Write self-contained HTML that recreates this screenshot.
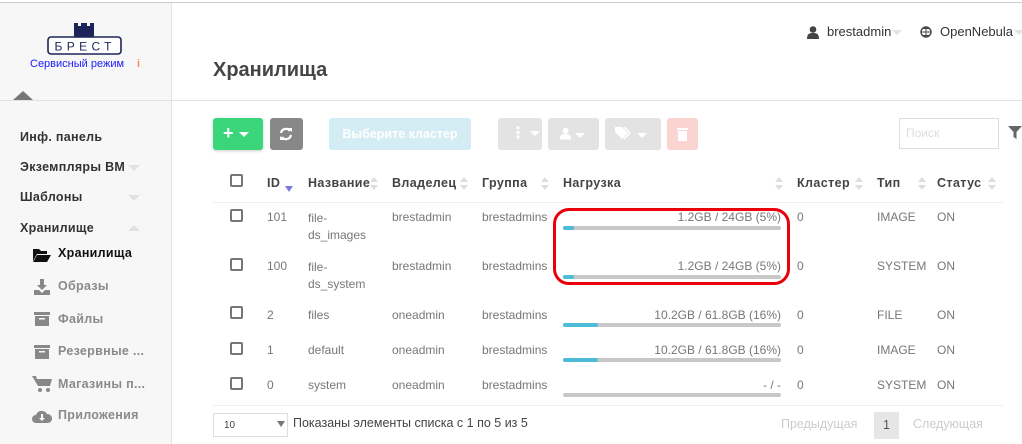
<!DOCTYPE html>
<html><head><meta charset="utf-8"><style>
*{margin:0;padding:0;box-sizing:border-box}
body{width:1022px;height:444px;overflow:hidden;background:#fff;font-family:"Liberation Sans","DejaVu Sans",sans-serif;position:relative;color:#555}
.a{position:absolute;white-space:nowrap}
.side{position:absolute;left:0;top:3px;width:172px;height:441px;background:#f7f7f7;border-right:1px solid #e3e3e3}
.nav{font-size:12.5px;font-weight:bold;color:#333;letter-spacing:.3px}
.sub{font-size:12.5px;font-weight:bold;color:#8a8a8a;letter-spacing:.3px}
.tri{position:absolute;width:0;height:0;border-left:6px solid transparent;border-right:6px solid transparent;border-top:6px solid #e2e2e2}
.th{font-size:12.5px;font-weight:bold;color:#444;letter-spacing:.4px}
.td{font-size:12px;color:#777}
.cb{position:absolute;width:13px;height:13px;border:2px solid #777;border-radius:2px}
.bar{position:absolute;left:563px;width:218px;height:4px;background:#c8c8c8;border-radius:2px}
.bar i{position:absolute;left:0;top:0;height:4px;background:#4dbcd8;border-radius:2px}
.srt{position:absolute;width:8px;height:14px}
.srt:before{content:"";position:absolute;top:0;left:0;border-left:4px solid transparent;border-right:4px solid transparent;border-bottom:5px solid #ddd}
.srt:after{content:"";position:absolute;top:8px;left:0;border-left:4px solid transparent;border-right:4px solid transparent;border-top:5px solid #ddd}
.btn{position:absolute;border-radius:3px;top:118px;height:32px}
.car{display:inline-block;border-left:5px solid transparent;border-right:5px solid transparent;border-top:5px solid #fff;vertical-align:middle}
</style></head><body>
<div class="a" style="left:0;top:2px;width:1022px;height:1px;background:#ccc"></div>
<div class="side"></div>
<div class="a" style="left:0;top:100px;width:1022px;height:1px;background:#e3e3e3"></div>
<!-- logo -->
<svg class="a" style="left:46px;top:21px" width="78" height="35" viewBox="0 0 78 35">
<path d="M28 2h4v3h3V2h6v3h3V2h4v15H28z" fill="#1d2457"/>
<rect x="2" y="16" width="73" height="17" rx="3" fill="#fff" stroke="#1d2457" stroke-width="1.6"/>
<text x="38.5" y="29.5" font-family="Liberation Sans" font-size="12" fill="#1d2457" text-anchor="middle" letter-spacing="3" textLength="60">БРЕСТ</text>
</svg>
<div class="a" style="left:30px;top:58px;font-size:11px;color:#1a1aff">Сервисный режим</div>
<div class="a" style="left:137px;top:58px;font-size:11px;color:#f39060;font-weight:bold">i</div>
<div class="a" style="left:13px;top:91px;border-left:10px solid transparent;border-right:10px solid transparent;border-bottom:9px solid #777"></div>
<div class="a nav" style="left:20px;top:130px">Инф. панель</div>
<div class="a nav" style="left:20px;top:160px">Экземпляры ВМ</div><div class="tri" style="left:128px;top:165px"></div>
<div class="a nav" style="left:20px;top:190px">Шаблоны</div><div class="tri" style="left:128px;top:195px"></div>
<div class="a nav" style="left:20px;top:221px">Хранилище</div><div class="tri" style="left:128px;top:225px;border-top:0;border-bottom:6px solid #e2e2e2"></div>
<svg class="a" style="left:33px;top:248px" width="18" height="14" viewBox="0 0 18 14"><path d="M0 1h6l2 2h6v3H4L0 13z M4 7h14l-4 7H0z" fill="#111"/></svg>
<div class="a nav" style="left:58px;top:246px;color:#111">Хранилища</div>
<svg class="a" style="left:34px;top:279px" width="16" height="16" viewBox="0 0 16 16"><path d="M6 0h4v6h3l-5 5-5-5h3z M0 11h5l3 3 3-3h5v5H0z" fill="#888"/></svg>
<div class="a sub" style="left:58px;top:279px">Образы</div>
<svg class="a" style="left:34px;top:312px" width="16" height="14" viewBox="0 0 16 14"><path d="M0 0h16v3H0z M1 4h14v10H1z" fill="#888"/><rect x="5" y="6" width="6" height="1.5" fill="#f7f7f7"/></svg>
<div class="a sub" style="left:58px;top:312px">Файлы</div>
<svg class="a" style="left:34px;top:345px" width="16" height="14" viewBox="0 0 16 14"><path d="M0 0h16v3H0z M1 4h14v10H1z" fill="#888"/><rect x="5" y="6" width="6" height="1.5" fill="#f7f7f7"/></svg>
<div class="a sub" style="left:58px;top:344px">Резервные ...</div>
<svg class="a" style="left:32px;top:376px" width="20" height="16" viewBox="0 0 20 16"><path d="M0 0h4l1 3h15l-2 7H6z" fill="#888"/><circle cx="8" cy="14" r="2" fill="#888"/><circle cx="16" cy="14" r="2" fill="#888"/></svg>
<div class="a sub" style="left:58px;top:377px">Магазины п...</div>
<svg class="a" style="left:32px;top:408px" width="20" height="16" viewBox="0 0 20 16"><path d="M4 15a4 4 0 0 1 0-8 6 6 0 0 1 11-1 4.5 4.5 0 0 1 1 9z" fill="#888"/><path d="M9 6h2v4h2l-3 3-3-3h2z" fill="#f7f7f7"/></svg>
<div class="a sub" style="left:58px;top:408px">Приложения</div>
<!-- header -->
<div class="a" style="left:213px;top:59px;font-size:20px;font-weight:bold;color:#444">Хранилища</div>
<svg class="a" style="left:807px;top:26px" width="12" height="13" viewBox="0 0 12 13"><circle cx="6" cy="3.5" r="3.3" fill="#444"/><path d="M0 13c0-5 2-6 6-6s6 1 6 6z" fill="#444"/></svg>
<div class="a" style="left:827px;top:24px;font-size:13px;color:#333">brestadmin</div>
<div class="tri" style="left:892px;top:30px;border-top-width:5px;border-left-width:5px;border-right-width:5px"></div>
<svg class="a" style="left:920px;top:26px" width="12" height="12" viewBox="0 0 12 12"><circle cx="6" cy="6" r="5" fill="none" stroke="#444" stroke-width="1.4"/><path d="M1 6h10M6 1v10M3 2.5h6M3 9.5h6" stroke="#444" stroke-width="1"/></svg>
<div class="a" style="left:940px;top:24px;font-size:13px;color:#333">OpenNebula</div>
<div class="tri" style="left:1014px;top:30px;border-top-width:5px;border-left-width:5px;border-right-width:5px"></div>
<!-- buttons -->
<div class="btn" style="left:213px;width:50px;background:#3cd67a;box-shadow:0 1px 3px rgba(0,0,0,.2);color:#fff;font-weight:bold;font-size:18px;padding:5px 0 0 10px;line-height:20px">+ <span class="car"></span></div>
<div class="btn" style="left:270px;width:33px;background:#888"><svg style="position:absolute;left:9px;top:9px" width="14" height="14" viewBox="0 0 14 14"><path d="M2 6a5 5 0 0 1 9-2M12 8a5 5 0 0 1-9 2" fill="none" stroke="#fff" stroke-width="2.2"/><path d="M9 1l4 0 0 4z M5 13l-4 0 0-4z" fill="#fff"/></svg></div>
<div class="btn" style="left:329px;width:142px;background:#d4ecf4;color:#fff;font-weight:bold;font-size:12.5px;text-align:center;line-height:32px">Выберите кластер</div>
<div class="btn" style="left:498px;width:44px;background:#e3e3e3;color:#fff;font-weight:bold;padding-left:12px;line-height:32px">⋮ <span class="car"></span></div>
<div class="btn" style="left:548px;width:51px;background:#e3e3e3;padding:9px 0 0 12px"><svg width="11" height="13" viewBox="0 0 12 13"><circle cx="6" cy="3.5" r="3.3" fill="#fff"/><path d="M0 13c0-5 2-6 6-6s6 1 6 6z" fill="#fff"/></svg> <span class="car"></span></div>
<div class="btn" style="left:605px;width:56px;background:#e3e3e3;padding:9px 0 0 10px"><svg width="18" height="13" viewBox="0 0 18 13"><path d="M0 0h7l6 6-6 6-7-7z" fill="#fff"/><path d="M9 0l6 6-6 6" fill="none" stroke="#fff" stroke-width="1.5"/></svg> <span class="car"></span></div>
<div class="btn" style="left:667px;width:31px;background:#f9d4d0"><svg style="position:absolute;left:10px;top:9px" width="11" height="14" viewBox="0 0 11 14"><path d="M0 1h11v2H0z M1 4h9v10H1z" fill="#fff"/></svg></div>
<div class="a" style="left:899px;top:118px;width:100px;height:31px;border:1px solid #ddd;font-size:12px;color:#ddd;padding:7px 6px">Поиск</div>
<svg class="a" style="left:1008px;top:126px" width="14" height="13" viewBox="0 0 14 13"><path d="M0 0h14L8.5 6v7l-3-2V6z" fill="#666"/></svg>
<!-- table header -->
<div class="cb" style="left:230px;top:174px"></div>
<div class="a th" style="left:267px;top:176px">ID</div>
<div class="a" style="left:285px;top:186px;border-left:4px solid transparent;border-right:4px solid transparent;border-top:6px solid #7b7bdc"></div>
<div class="a th" style="left:308px;top:176px">Название</div><div class="srt" style="left:370px;top:177px"></div>
<div class="a th" style="left:392px;top:176px">Владелец</div><div class="srt" style="left:460px;top:177px"></div>
<div class="a th" style="left:482px;top:176px">Группа</div><div class="srt" style="left:541px;top:177px"></div>
<div class="a th" style="left:563px;top:176px">Нагрузка</div><div class="srt" style="left:775px;top:177px"></div>
<div class="a th" style="left:797px;top:176px">Кластер</div><div class="srt" style="left:855px;top:177px"></div>
<div class="a th" style="left:877px;top:176px">Тип</div><div class="srt" style="left:918px;top:177px"></div>
<div class="a th" style="left:937px;top:176px">Статус</div><div class="srt" style="left:988px;top:177px"></div>
<div class="a" style="left:213px;top:202px;width:790px;height:1px;background:#eee"></div>
<!-- rows -->
<div class="cb" style="left:230px;top:209px"></div>
<div class="a td" style="left:267px;top:210px">101</div><div class="a td" style="left:308px;top:210px;line-height:17px">file-<br>ds_images</div>
<div class="a td" style="left:392px;top:210px">brestadmin</div><div class="a td" style="left:482px;top:210px">brestadmins</div>
<div class="a td" style="left:563px;width:218px;text-align:right;top:210px">1.2GB / 24GB (5%)</div>
<div class="bar" style="top:226px"><i style="width:11px"></i></div>
<div class="a td" style="left:797px;top:210px">0</div><div class="a td" style="left:877px;top:210px">IMAGE</div><div class="a td" style="left:937px;top:210px">ON</div>

<div class="cb" style="left:230px;top:258px"></div>
<div class="a td" style="left:267px;top:259px">100</div><div class="a td" style="left:308px;top:259px;line-height:17px">file-<br>ds_system</div>
<div class="a td" style="left:392px;top:259px">brestadmin</div><div class="a td" style="left:482px;top:259px">brestadmins</div>
<div class="a td" style="left:563px;width:218px;text-align:right;top:259px">1.2GB / 24GB (5%)</div>
<div class="bar" style="top:275px"><i style="width:11px"></i></div>
<div class="a td" style="left:797px;top:259px">0</div><div class="a td" style="left:877px;top:259px">SYSTEM</div><div class="a td" style="left:937px;top:259px">ON</div>

<div class="a" style="left:553px;top:208px;width:237px;height:77px;border:3px solid #e8000b;border-radius:16px"></div>

<div class="cb" style="left:230px;top:306px"></div>
<div class="a td" style="left:267px;top:308px">2</div><div class="a td" style="left:308px;top:308px">files</div>
<div class="a td" style="left:392px;top:308px">oneadmin</div><div class="a td" style="left:482px;top:308px">brestadmins</div>
<div class="a td" style="left:563px;width:218px;text-align:right;top:308px">10.2GB / 61.8GB (16%)</div>
<div class="bar" style="top:323px"><i style="width:35px"></i></div>
<div class="a td" style="left:797px;top:308px">0</div><div class="a td" style="left:877px;top:308px">FILE</div><div class="a td" style="left:937px;top:308px">ON</div>

<div class="cb" style="left:230px;top:342px"></div>
<div class="a td" style="left:267px;top:343px">1</div><div class="a td" style="left:308px;top:343px">default</div>
<div class="a td" style="left:392px;top:343px">oneadmin</div><div class="a td" style="left:482px;top:343px">brestadmins</div>
<div class="a td" style="left:563px;width:218px;text-align:right;top:343px">10.2GB / 61.8GB (16%)</div>
<div class="bar" style="top:358px"><i style="width:35px"></i></div>
<div class="a td" style="left:797px;top:343px">0</div><div class="a td" style="left:877px;top:343px">IMAGE</div><div class="a td" style="left:937px;top:343px">ON</div>

<div class="cb" style="left:230px;top:377px"></div>
<div class="a td" style="left:267px;top:378px">0</div><div class="a td" style="left:308px;top:378px">system</div>
<div class="a td" style="left:392px;top:378px">oneadmin</div><div class="a td" style="left:482px;top:378px">brestadmins</div>
<div class="a td" style="left:563px;width:218px;text-align:right;top:378px">- / -</div>
<div class="bar" style="top:393px"></div>
<div class="a td" style="left:797px;top:378px">0</div><div class="a td" style="left:877px;top:378px">SYSTEM</div><div class="a td" style="left:937px;top:378px">ON</div>
<div class="a" style="left:213px;top:405px;width:790px;height:1px;background:#eee"></div>
<!-- footer -->
<div class="a" style="left:213px;top:413px;width:75px;height:24px;border:1px solid #ddd;font-size:10px;color:#444;padding:6px 10px">10</div>
<div class="a" style="left:277px;top:421px;border-left:4px solid transparent;border-right:4px solid transparent;border-top:6px solid #777"></div>
<div class="a" style="left:293px;top:416px;font-size:12.5px;color:#444">Показаны элементы списка с 1 по 5 из 5</div>
<div class="a" style="left:781px;top:417px;font-size:12.5px;color:#ccc">Предыдущая</div>
<div class="a" style="left:874px;top:412px;width:25px;height:27px;background:#e6e6e6;font-size:12.5px;color:#555;text-align:center;line-height:27px">1</div>
<div class="a" style="left:913px;top:417px;font-size:12.5px;color:#ccc">Следующая</div>
</body></html>
